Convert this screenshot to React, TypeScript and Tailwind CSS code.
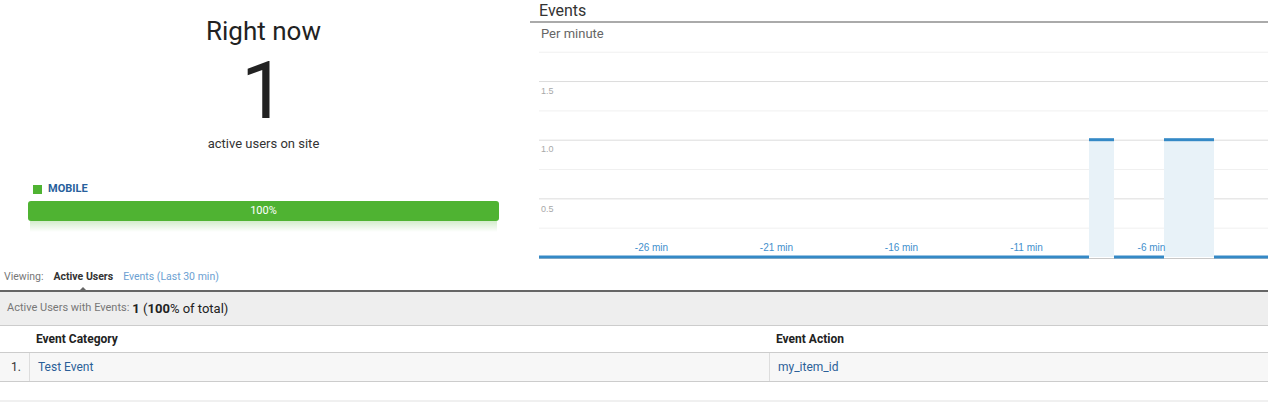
const colW = 25;
const x0 = 9;
const zeroY = 213;
const unit = 117.3;
const yOf = (v: number) => zeroY - v * unit;

const values = Array.from({ length: 30 }, (_, i) => (i === 22 || i === 25 || i === 26 ? 1 : 0));
const xLabels = [
  { i: 4, t: "-26 min" },
  { i: 9, t: "-21 min" },
  { i: 14, t: "-16 min" },
  { i: 19, t: "-11 min" },
  { i: 24, t: "-6 min" },
];

function EventsChart() {
  return (
    <svg width="738" height="216" className="block">
      {[1.75, 1.25, 0.75, 0.25].map((v) => (
        <line key={v} x1={x0} x2={738} y1={yOf(v) + 0.5} y2={yOf(v) + 0.5} stroke="#f0f0f0" />
      ))}
      {[1.5, 1, 0.5].map((v) => (
        <line key={v} x1={x0} x2={738} y1={yOf(v) + 0.5} y2={yOf(v) + 0.5} stroke="#dcdcdc" />
      ))}
      <g fontFamily="'Liberation Sans', Arial, sans-serif" fontSize="9" fill="#a8a8a8">
        <text x="11" y="50">1.5</text>
        <text x="11" y="108">1.0</text>
        <text x="11" y="167.5">0.5</text>
      </g>
      {values.map((v, i) =>
        v > 0 ? (
          <rect key={"f" + i} x={x0 + i * colW} y={yOf(v)} width={colW} height={zeroY - yOf(v)} fill="#e8f2f8" />
        ) : null
      )}
      <line x1={x0} x2={738} y1={zeroY + 1.5} y2={zeroY + 1.5} stroke="#c8c8c8" strokeWidth="1" />
      {values.map((v, i) => (
        <line
          key={"l" + i}
          x1={x0 + i * colW}
          x2={x0 + (i + 1) * colW}
          y1={yOf(v)}
          y2={yOf(v)}
          stroke="#3489c6"
          strokeWidth="3"
        />
      ))}
      <g fontFamily="'Liberation Sans', Arial, sans-serif" fontSize="10" fill="#4390cd" textAnchor="middle">
        {xLabels.map((l) => (
          <text key={l.t} x={x0 + l.i * colW + colW / 2} y="207">
            {l.t}
          </text>
        ))}
      </g>
    </svg>
  );
}

export default function App() {
  return (
    <div className="w-[1268px] h-[405px] overflow-hidden bg-white font-['Roboto',sans-serif] text-[#222]">
      <div className="flex h-[260px]">
        <div className="w-[530px] shrink-0 pl-[28px] pr-[31px] pt-[15px]">
          <div className="text-center text-[26px] leading-[32px] text-[#222]">Right now</div>
          <div className="mt-[4px] text-center text-[80px] leading-[80px] text-[#222]">1</div>
          <div className="mt-[5px] text-center text-[13px] leading-[16px] text-[#333]">active users on site</div>
          <div className="mt-[31px] flex h-[12px] items-center gap-[6px] pl-[5px]">
            <span className="h-[9px] w-[9px] bg-[#4fb332]" />
            <span className="text-[11px] font-bold leading-[12px] text-[#27609c]">MOBILE</span>
          </div>
          <div className="mt-[6px] h-[20px] rounded-[3px] bg-[#4fb332] text-center text-[11px] leading-[20px] text-white">
            100%
          </div>
          <div className="mx-[2px] h-[11px] bg-gradient-to-b from-[#4fb332]/25 to-transparent" />
        </div>
        <div className="min-w-0 flex-1">
          <div className="border-b-2 border-[#aaaaaa] pl-[9px] text-[16px] leading-[21px] text-[#333]">Events</div>
          <div className="pl-[11px] text-[13px] leading-[21px] text-[#666]">Per minute</div>
          <EventsChart />
        </div>
      </div>

      <div className="flex h-[32px] items-start gap-[10px] border-b-2 border-[#666] pl-[4px] pt-[10px] text-[10.5px] leading-[14px]">
        <span className="text-[#777]">Viewing:</span>
        <span className="relative font-bold text-[#333]">
          Active Users
          <span className="absolute left-1/2 top-[calc(100%+3px)] h-0 w-0 -translate-x-1/2 border-x-[5px] border-b-[5px] border-x-transparent border-b-[#666]" />
        </span>
        <span className="text-[#6c9fd2]">Events (Last 30 min)</span>
      </div>

      <div className="flex h-[34px] items-center border-b border-[#cccccc] bg-[#eeeeee] pl-[7px]">
        <span className="text-[11px] text-[#777]">Active Users with Events:</span>
        <span className="ml-[3px] text-[13px] text-[#222]">
          <b>1</b> (<b>100</b>% of total)
        </span>
      </div>

      <div className="grid h-[27px] grid-cols-[30px_740px_1fr] items-center border-b border-[#cccccc] text-[12px] font-bold text-[#222]">
        <div />
        <div className="pl-[6px]">Event Category</div>
        <div className="pl-[6px]">Event Action</div>
      </div>

      <div className="grid h-[29px] grid-cols-[30px_740px_1fr] border-b border-[#cccccc] bg-[#f7f7f7] text-[12px]">
        <div className="flex items-center justify-end border-r border-[#dddddd] pr-[8px] text-[#333]">1.</div>
        <div className="flex items-center border-r border-[#dddddd] pl-[8px] text-[#2b5f98]">Test Event</div>
        <div className="flex items-center pl-[8px] text-[#2b5f98]">my_item_id</div>
      </div>

      <div className="h-[18px]" />
      <div className="h-[2px] bg-[#f0f0f0]" />
    </div>
  );
}
